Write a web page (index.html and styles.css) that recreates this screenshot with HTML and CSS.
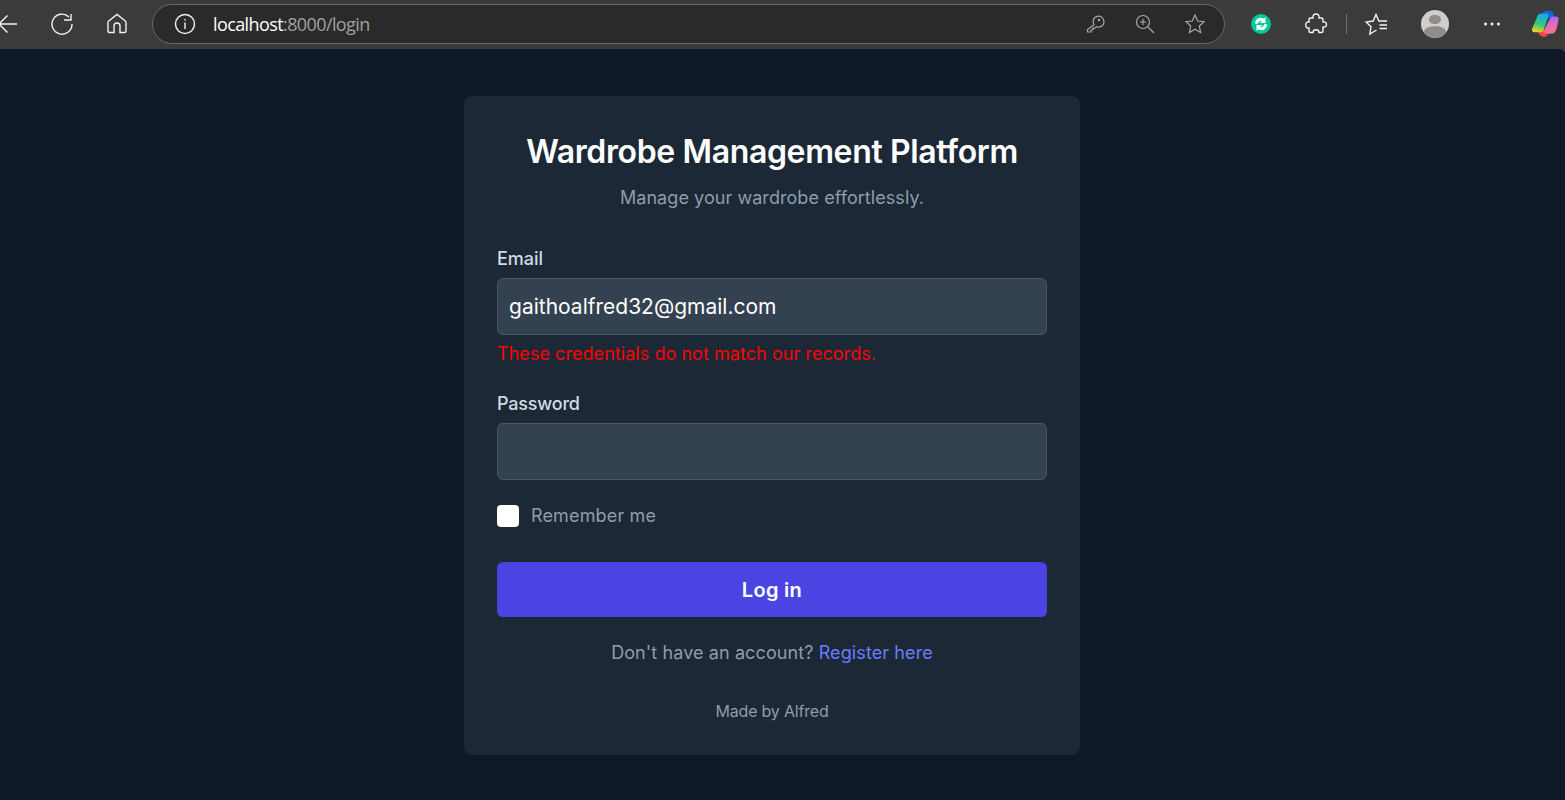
FILE: index.html
```html
<!DOCTYPE html>
<html lang="en">
<head>
  <meta charset="UTF-8">
  <title>Log in</title>
  <link rel="stylesheet" href="styles.css">
</head>
<body>
  <header class="toolbar">
    <svg class="icon back" width="24" height="24" viewBox="0 0 24 24"><path d="M23 12H5M13.500 3.500L5 12l8.500 8.500"/></svg>
    <svg class="icon reload" width="24" height="24" viewBox="0 0 24 24"><path d="M19 5A10 10 0 1 0 22 12M21 2v6h-7"/></svg>
    <svg class="icon home" width="24" height="24" viewBox="0 0 24 24"><path d="M3 19V10.500a2 2 0 0 1 .7-1.500L12 2.500 20.300 9a2 2 0 0 1 .7 1.500V19a1.500 1.500 0 0 1-1.500 1.500H15v-6.500a3 3 0 0 0-6 0v6.500H4.500A1.500 1.500 0 0 1 3 19z"/></svg>
    <div class="urlbar">
      <svg class="icon info" width="22" height="22" viewBox="0 0 22 22"><circle cx="11" cy="11" r="9.500"/><path d="M11 9.500v6.500M11 6v1.500"/></svg>
      <span class="url"><b>localhost</b>:8000/login</span>
      <svg class="icon dim key" width="20" height="20" viewBox="0 0 20 20"><path d="M9 10.800A5.500 5.500 0 1 1 11.500 12.800L10 14.200H8V16H6V18H2.500V15.500z"/><circle cx="14" cy="6" r=".6"/></svg>
      <svg class="icon dim zoomin" width="20" height="20" viewBox="0 0 20 20"><circle cx="8" cy="8" r="6.500"/><path d="M13 13l6 6M8 5v6M5 8h6"/></svg>
      <svg class="icon dim star" width="22" height="22" viewBox="0 0 22 22"><path d="M11 2l2.700 6 6.300.7-4.700 4.300 1.300 6.500L11 16.200 5.400 19.500l1.300-6.500L2 8.700 8.300 8z"/></svg>
    </div>
    <div class="ext">
      <svg width="16" height="16" viewBox="0 0 14 14"><path d="M1.800 6.800A5 5 0 0 1 9.500 2.300L11 .8v5.400H5.800l1.900-1.900A2.800 2.800 0 0 0 4.300 6.800zM12.200 7.200A5 5 0 0 1 4.500 11.700L3 13.200V7.800h5.200l-1.900 1.900a2.800 2.800 0 0 0 3.400-2.500z"/></svg>
    </div>
    <svg class="icon puzzle" width="24" height="24" viewBox="0 0 24 24"><path d="M9 6C8.500 3.500 10 2 12 2s3.500 1.500 3 4h2.500A1.500 1.500 0 0 1 19 7.500V10c2.500-.5 3.500 1 3.500 2.500S21.500 15.500 19 15v4a1.500 1.500 0 0 1-1.500 1.500H15c0-2-1.500-2.700-3-2.700s-3 .7-3 2.700H6.500A1.500 1.500 0 0 1 5 19v-3c-2 .5-3.200-1-3.200-3S3 9.500 5 10V7.500A1.500 1.500 0 0 1 6.500 6z"/></svg>
    <span class="divider"></span>
    <svg class="icon favs" width="24" height="24" viewBox="0 0 24 24"><path d="M14.500 9.500L13.800 9 11 2.500 8.200 9l-7.200 1L6 14.800 4.800 22l6.700-4M14.500 9H22M14.500 13H22M14.500 16.500H22"/></svg>
    <div class="avatar"><span class="avatar-head"></span><span class="avatar-body"></span></div>
    <svg class="dots" width="18" height="4" viewBox="0 0 18 4"><circle cx="2.500" cy="2" r="1.500"/><circle cx="9" cy="2" r="1.500"/><circle cx="15.500" cy="2" r="1.500"/></svg>
    <svg class="copilot" width="28" height="28" viewBox="0 0 28 28">
      <defs>
        <linearGradient id="cpa" x1="0.500" y1="0" x2="0.300" y2="1"><stop offset="0" stop-color="#17a9f0"/><stop offset=".55" stop-color="#30c878"/><stop offset="1" stop-color="#f6d21c"/></linearGradient>
        <linearGradient id="cpb" x1="0.500" y1="0" x2="0.500" y2="1"><stop offset="0" stop-color="#a868ea"/><stop offset=".6" stop-color="#ee6cb4"/><stop offset="1" stop-color="#f7727a"/></linearGradient>
        <linearGradient id="cpc" x1="0" y1="0" x2="1" y2="0"><stop offset="0" stop-color="#f5561f"/><stop offset="1" stop-color="#e82f70"/></linearGradient>
      </defs>
      <path fill="#1763d8" d="M12 2.500c.5-1 1.500-1.500 2.500-1.500H19c2.500 0 4 2 4 4.500V8h-8z"/>
      <path fill="url(#cpc)" d="M7 20h11l-.8 3.500C16.700 26 15 27 13 27c-3 0-6-3-6-7z"/>
      <path fill="url(#cpa)" d="M6 7c.6-2 2-3.500 4-3.500h6c1.500 0 2 1 1.500 2.500l-4.700 14c-.5 1.500-1.600 2.200-3.300 2.200H3.500C1.500 22.200.6 20.800 1 19z"/>
      <path fill="url(#cpb)" d="M19 8.500c.4-1.300 1.300-2 2.700-2H25c2 0 3 1.300 2.600 3.300l-2 9c-.6 3-2.800 5-5.600 5h-5.500c-1.500 0-2.300-1-1.800-2.500z"/>
    </svg>
  </header>

  <main class="page">
    <form class="card">
      <h1 class="title">Wardrobe Management Platform</h1>
      <p class="subtitle">Manage your wardrobe effortlessly.</p>

      <label class="label" for="email">Email</label>
      <input class="input" id="email" type="email" value="gaithoalfred32@gmail.com">
      <p class="error">These credentials do not match our records.</p>

      <label class="label label-password" for="password">Password</label>
      <input class="input" id="password" type="password">

      <label class="remember">
        <span class="checkbox"></span>
        <span>Remember me</span>
      </label>

      <button class="submit" type="button">Log in</button>

      <p class="register">Don't have an account? <a href="#">Register here</a></p>
      <p class="credit">Made by Alfred</p>
    </form>
  </main>
</body>
</html>
```

FILE: styles.css
```css
* { box-sizing: border-box; }
body { margin: 0; height: 800px; overflow: hidden; background: #3b3b3b; font-family: Inter, "Noto Sans", sans-serif; }

.toolbar { height: 49px; padding-bottom: 2px; display: flex; align-items: center; }
.icon { fill: none; stroke: #f2f2f2; stroke-width: 1.4; flex: none; }
.icon.dim { stroke: #a8a8a8; stroke-width: 1.2; }
.back { margin-left: -6px; }
.reload { margin-left: 32px; }
.home { margin-left: 31px; }
.urlbar { width: 1073px; height: 40px; margin-left: 23px; padding-left: 21px; display: flex; align-items: center; background: #2a2a2a; border: 1.5px solid #686868; border-radius: 20px; }
.url { margin-left: 17px; font-family: "Open Sans", sans-serif; font-size: 18px; letter-spacing: -0.6px; color: #a0a0a0; }
.url b { font-weight: 400; color: #fff; }
.key { margin-left: auto; }
.zoomin { margin-left: 30px; }
.star { margin-left: 29px; margin-right: 18px; }
.ext { width: 20px; height: 20px; margin-left: 26px; border-radius: 50%; background: #00c896; display: flex; align-items: center; justify-content: center; flex: none; }
.ext svg { fill: #fff; }
.puzzle { margin-left: 33px; }
.divider { width: 1px; height: 20px; margin-left: 18px; background: #6f6f6f; flex: none; }
.favs { margin-left: 18px; }
.avatar { width: 28px; height: 28px; margin-left: 32px; border-radius: 50%; background: #d0cdca; overflow: hidden; display: flex; flex-direction: column; align-items: center; flex: none; }
.avatar-head { width: 12px; height: 12px; margin-top: 5px; border-radius: 50%; background: #8f8c8a; }
.avatar-body { width: 22px; height: 14px; margin-top: 2px; border-radius: 50%; background: #8f8c8a; }
.dots { margin-left: 34px; fill: #f2f2f2; flex: none; }
.copilot { margin-left: 30px; flex: none; }

.page { height: 751px; display: flex; justify-content: center; padding-top: 47px; padding-right: 21px; background: #0e1826; border-top-right-radius: 6px; }
.card { width: 616px; height: 659px; padding: 33px; background: #1c2836; border-radius: 8px; }
.title { margin: 0; font-size: 32px; line-height: 46px; font-weight: 600; letter-spacing: -0.36px; color: #fff; text-align: center; white-space: nowrap; }
.subtitle { margin: 9px 0 0; font-size: 18px; line-height: 28px; letter-spacing: 0.06px; color: #8f9caa; text-align: center; }
.label { display: block; margin-top: 33px; font-size: 18px; line-height: 28px; font-weight: 500; color: #d1dbe3; }
.label-password { margin-top: 22px; letter-spacing: -0.2px; }
.input { display: block; width: 100%; height: 57px; margin-top: 5px; padding: 0 11px; font: 400 21px Inter, "Noto Sans", sans-serif; color: #fff; background: #344151; border: 1px solid #4b5765; border-radius: 6px; outline: none; }
.error { margin: 5px 0 0; font-size: 18px; line-height: 28px; letter-spacing: 0.05px; color: #f00; }
.remember { display: flex; align-items: center; gap: 12px; margin-top: 22px; font-size: 18px; line-height: 28px; letter-spacing: 0.15px; color: #8f9caa; }
.checkbox { width: 22px; height: 22px; border-radius: 4px; background: #fff; flex: none; }
.submit { display: block; width: 100%; height: 55px; margin-top: 32px; font: 600 20px Inter, "Noto Sans", sans-serif; letter-spacing: 0.3px; color: #fff; background: #4c44e2; border: none; border-radius: 6px; }
.register { margin: 22px 0 0; font-size: 18px; line-height: 28px; letter-spacing: 0.1px; color: #8f9caa; text-align: center; }
.register a { color: #6b7cff; text-decoration: none; }
.credit { margin: 32px 0 0; font-size: 16px; line-height: 24px; letter-spacing: -0.2px; color: #8f9caa; text-align: center; }
```
